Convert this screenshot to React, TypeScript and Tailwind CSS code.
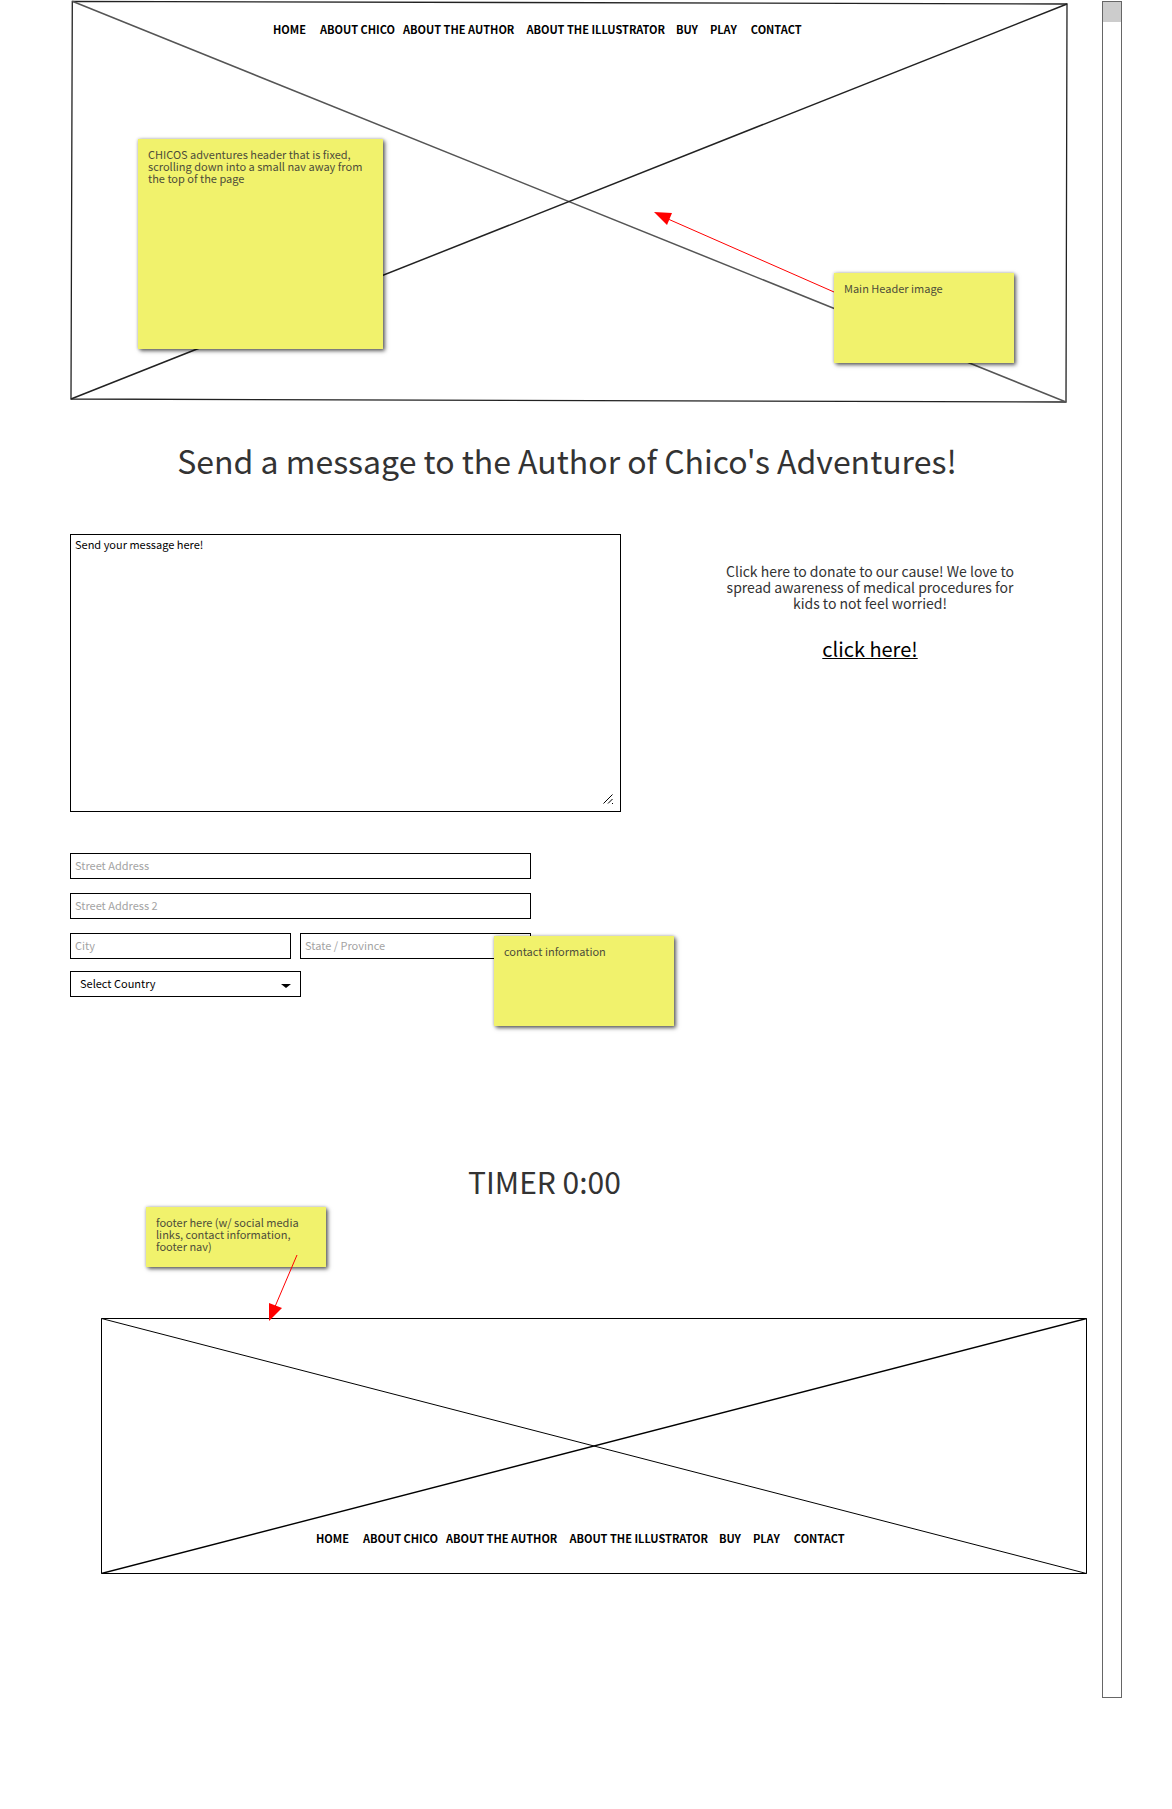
import type { ReactNode } from "react";

const navItems = [
  { label: "HOME", gap: "mr-[14px]" },
  { label: "ABOUT CHICO", gap: "mr-[8px]" },
  { label: "ABOUT THE AUTHOR", gap: "mr-[12px]" },
  { label: "ABOUT THE ILLUSTRATOR", gap: "mr-[11px]" },
  { label: "BUY", gap: "mr-[12px]" },
  { label: "PLAY", gap: "mr-[14px]" },
  { label: "CONTACT", gap: "" },
];

function Nav({ label }: { label: string }) {
  return (
    <nav aria-label={label} className="relative flex text-[11px] leading-4 font-bold whitespace-nowrap text-black">
      {navItems.map((item) => (
        <a key={item.label} href="#" className={item.gap}>
          {item.label}
        </a>
      ))}
    </nav>
  );
}

function Note({ className, children }: { className: string; children?: ReactNode }) {
  return (
    <div
      className={
        "absolute bg-[#f1f26c] px-[10px] pt-[9px] text-[11px] leading-[12px] text-[#4d4d3a] shadow-[2px_2px_4px_0px_rgba(0,0,0,0.6),0_0_3px_0px_rgba(0,0,0,0.25)] " +
        className
      }
    >
      {children}
    </div>
  );
}

const fieldClass =
  "h-[26px] border border-black bg-white px-1 pb-[2px] text-[11px] leading-4 text-black outline-none placeholder:text-[#a3a3a3] placeholder:opacity-100";

export default function App() {
  return (
    <div className="flex items-start bg-white pb-[111px] font-['Noto_Sans_CJK_SC',sans-serif] text-[#333333]">
      <main className="min-w-0 flex-1">
        <header className="relative mr-[34px] ml-[70px] h-[404px] pt-[21px] pl-[203px]">
          <svg
            className="absolute inset-0 h-full w-full"
            viewBox="0 0 998 404"
            preserveAspectRatio="none"
            fill="none"
            stroke="#222"
            strokeWidth="1.3"
            aria-hidden="true"
          >
            <path d="M2.3 1.3 L997 4 L996 402 L1 399 Z" />
            <path d="M2.3 1.3 L996 402" stroke="#555" strokeWidth="1.5" />
            <path d="M1 399 L997 4" strokeWidth="1.5" />
          </svg>
          <Nav label="Main" />
          <svg className="absolute top-[205px] left-[580px]" width="190" height="92" viewBox="0 0 190 92" aria-hidden="true">
            <path d="M18 14 L184 87" stroke="#f00" fill="none" />
            <path d="M4 7 L22 8 L17 20 Z" fill="#f00" />
          </svg>
          <Note className="top-[139px] left-[68px] h-[210px] w-[245px]">
            CHICOS adventures header that is fixed, scrolling down into a small nav away from the top of the page
          </Note>
          <Note className="top-[273px] right-[54px] h-[90px] w-[180px]">Main Header image</Note>
        </header>

        <h1 className="mt-[32px] mr-[38px] ml-[70px] text-center text-[32px] leading-[48px]">
          Send a message to the Author of Chico's Adventures!
        </h1>

        <section className="mt-[50px] ml-[70px] flex">
          <div className="relative w-[551px]">
            <textarea
              aria-label="Message"
              defaultValue="Send your message here!"
              className="block h-[278px] w-full resize-none border border-black px-1 pt-px text-[11px] leading-4 text-black outline-none"
            />
            <svg
              className="absolute right-[8px] bottom-[8px]"
              width="10"
              height="10"
              viewBox="0 0 10 10"
              stroke="#000"
              fill="none"
              aria-hidden="true"
            >
              <path d="M0.500 9.500 L9.500 0.500 M5 9.500 L9.500 5 M9 9.500 H10" />
            </svg>
          </div>
          <div className="flex flex-1 flex-col items-center pt-[29px] pl-[17px] text-center">
            <p className="w-[310px] text-[14px] leading-4">
              Click here to donate to our cause! We love to spread awareness of medical procedures for kids to not feel
              worried!
            </p>
            <a href="#" className="mt-[23px] text-[20px] leading-[30px] text-black underline decoration-1 underline-offset-1">
              click here!
            </a>
          </div>
        </section>

        <form className="relative mt-[41px] ml-[70px] flex w-[461px] flex-col">
          <input aria-label="Street Address" placeholder="Street Address" className={fieldClass} />
          <input aria-label="Street Address 2" placeholder="Street Address 2" className={fieldClass + " mt-[14px]"} />
          <div className="mt-[14px] flex gap-[9px]">
            <input aria-label="City" placeholder="City" className={fieldClass + " w-[221px]"} />
            <input aria-label="State / Province" placeholder="State / Province" className={fieldClass + " min-w-0 flex-1"} />
          </div>
          <div className="relative mt-[12px] w-[231px]">
            <select
              aria-label="Country"
              className="block h-[26px] w-full appearance-none border border-black bg-white px-[9px] pb-[2px] text-[11px] leading-4 text-black outline-none"
            >
              <option>Select Country</option>
            </select>
            <svg className="pointer-events-none absolute top-[13px] right-[10px]" width="10" height="4" viewBox="0 0 10 4" aria-hidden="true">
              <path d="M0 0 H10 L5 4 Z" fill="#000" />
            </svg>
          </div>
          <Note className="top-[83px] left-[424px] h-[90px] w-[180px]">contact information</Note>
        </form>

        <section className="relative mt-[161px] mr-[83px] ml-[70px] h-[160px]">
          <h2 className="text-center text-[30px] leading-[46px]">TIMER 0:00</h2>
          <Note className="top-[49px] left-[76px] h-[60px] w-[180px]">
            footer here (w/ social media links, contact information, footer nav)
          </Note>
        </section>

        <footer className="relative mr-[15px] ml-[101px] flex h-[256px] items-end pb-[28px] pl-[215px]">
          <svg
            className="absolute inset-0 h-full w-full"
            viewBox="0 0 986 256"
            preserveAspectRatio="none"
            fill="none"
            stroke="#000"
            aria-hidden="true"
          >
            <path d="M0.500 0.500 H985.500 V255.500 H0.500 Z" />
            <path d="M0.500 0.500 L985.500 255.500" />
            <path d="M0.500 255.500 L985.500 0.500" strokeWidth="1.4" />
          </svg>
          <svg className="absolute -top-[65px] left-[164px]" width="36" height="70" viewBox="0 0 36 70" aria-hidden="true">
            <path d="M32 2 L9 56" stroke="#f00" fill="none" />
            <path d="M4 50 L17 55 L4 68 Z" fill="#f00" />
          </svg>
          <Nav label="Footer" />
        </footer>
      </main>

      <div className="mt-px mr-[50px] h-[1697px] w-5 border border-[#666666]" aria-hidden="true">
        <div className="h-5 bg-[#cccccc]" />
      </div>
    </div>
  );
}
